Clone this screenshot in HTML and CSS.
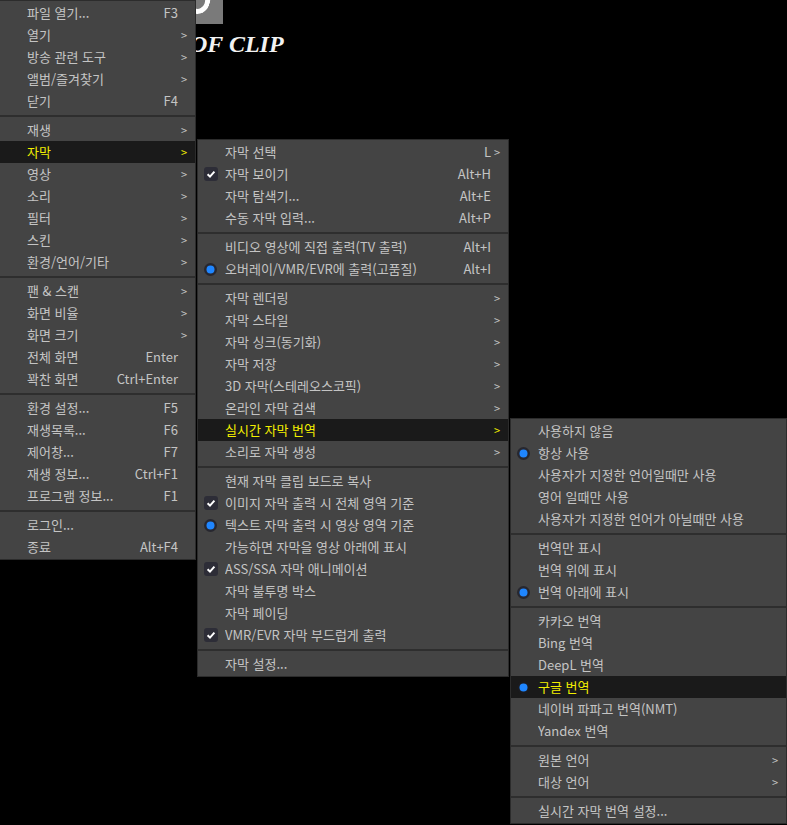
FILE: index.html
```html
<!DOCTYPE html>
<html lang="ko">
<head>
<meta charset="utf-8">
<title>메뉴</title>
<link rel="stylesheet" href="styles.css">
</head>
<body>
<div class="stage">
  <div class="logo"><span class="logo-curve"></span></div>
  <div class="tagline">OF CLIP</div>

  <div class="menu m1">
    <div class="item"><span class="ic"></span><span class="lb">파일 열기...</span><span class="sc">F3</span><span class="ar"></span></div>
    <div class="item"><span class="ic"></span><span class="lb">열기</span><span class="sc"></span><span class="ar">&gt;</span></div>
    <div class="item"><span class="ic"></span><span class="lb">방송 관련 도구</span><span class="sc"></span><span class="ar">&gt;</span></div>
    <div class="item"><span class="ic"></span><span class="lb">앨범/즐겨찾기</span><span class="sc"></span><span class="ar">&gt;</span></div>
    <div class="item"><span class="ic"></span><span class="lb">닫기</span><span class="sc">F4</span><span class="ar"></span></div>
    <div class="sep"></div>
    <div class="item"><span class="ic"></span><span class="lb">재생</span><span class="sc"></span><span class="ar">&gt;</span></div>
    <div class="item active"><span class="ic"></span><span class="lb">자막</span><span class="sc"></span><span class="ar">&gt;</span></div>
    <div class="item"><span class="ic"></span><span class="lb">영상</span><span class="sc"></span><span class="ar">&gt;</span></div>
    <div class="item"><span class="ic"></span><span class="lb">소리</span><span class="sc"></span><span class="ar">&gt;</span></div>
    <div class="item"><span class="ic"></span><span class="lb">필터</span><span class="sc"></span><span class="ar">&gt;</span></div>
    <div class="item"><span class="ic"></span><span class="lb">스킨</span><span class="sc"></span><span class="ar">&gt;</span></div>
    <div class="item"><span class="ic"></span><span class="lb">환경/언어/기타</span><span class="sc"></span><span class="ar">&gt;</span></div>
    <div class="sep"></div>
    <div class="item"><span class="ic"></span><span class="lb">팬 &amp; 스캔</span><span class="sc"></span><span class="ar">&gt;</span></div>
    <div class="item"><span class="ic"></span><span class="lb">화면 비율</span><span class="sc"></span><span class="ar">&gt;</span></div>
    <div class="item"><span class="ic"></span><span class="lb">화면 크기</span><span class="sc"></span><span class="ar">&gt;</span></div>
    <div class="item"><span class="ic"></span><span class="lb">전체 화면</span><span class="sc">Enter</span><span class="ar"></span></div>
    <div class="item"><span class="ic"></span><span class="lb">꽉찬 화면</span><span class="sc">Ctrl+Enter</span><span class="ar"></span></div>
    <div class="sep"></div>
    <div class="item"><span class="ic"></span><span class="lb">환경 설정...</span><span class="sc">F5</span><span class="ar"></span></div>
    <div class="item"><span class="ic"></span><span class="lb">재생목록...</span><span class="sc">F6</span><span class="ar"></span></div>
    <div class="item"><span class="ic"></span><span class="lb">제어창...</span><span class="sc">F7</span><span class="ar"></span></div>
    <div class="item"><span class="ic"></span><span class="lb">재생 정보...</span><span class="sc">Ctrl+F1</span><span class="ar"></span></div>
    <div class="item"><span class="ic"></span><span class="lb">프로그램 정보...</span><span class="sc">F1</span><span class="ar"></span></div>
    <div class="sep"></div>
    <div class="item"><span class="ic"></span><span class="lb">로그인...</span><span class="sc"></span><span class="ar"></span></div>
    <div class="item"><span class="ic"></span><span class="lb">종료</span><span class="sc">Alt+F4</span><span class="ar"></span></div>
  </div>

  <div class="menu m2">
    <div class="item"><span class="ic"></span><span class="lb">자막 선택</span><span class="sc">L</span><span class="ar">&gt;</span></div>
    <div class="item"><span class="ic"><svg class="chk" width="14" height="14" viewBox="0 0 14 14"><rect x="0" y="0" width="14" height="14" rx="3" fill="#2d2d37"/><path d="M3.6 7.2 L6 9.6 L10.4 4.6" fill="none" stroke="#fff" stroke-width="2"/></svg></span><span class="lb">자막 보이기</span><span class="sc">Alt+H</span><span class="ar"></span></div>
    <div class="item"><span class="ic"></span><span class="lb">자막 탐색기...</span><span class="sc">Alt+E</span><span class="ar"></span></div>
    <div class="item"><span class="ic"></span><span class="lb">수동 자막 입력...</span><span class="sc">Alt+P</span><span class="ar"></span></div>
    <div class="sep"></div>
    <div class="item"><span class="ic"></span><span class="lb">비디오 영상에 직접 출력(TV 출력)</span><span class="sc">Alt+I</span><span class="ar"></span></div>
    <div class="item"><span class="ic"><svg width="13" height="13" viewBox="0 0 13 13"><circle cx="6.5" cy="6.5" r="6.5" fill="#27272f"/><circle cx="6.5" cy="6.5" r="4" fill="#1f86ff"/></svg></span><span class="lb">오버레이/VMR/EVR에 출력(고품질)</span><span class="sc">Alt+I</span><span class="ar"></span></div>
    <div class="sep"></div>
    <div class="item"><span class="ic"></span><span class="lb">자막 렌더링</span><span class="sc"></span><span class="ar">&gt;</span></div>
    <div class="item"><span class="ic"></span><span class="lb">자막 스타일</span><span class="sc"></span><span class="ar">&gt;</span></div>
    <div class="item"><span class="ic"></span><span class="lb">자막 싱크(동기화)</span><span class="sc"></span><span class="ar">&gt;</span></div>
    <div class="item"><span class="ic"></span><span class="lb">자막 저장</span><span class="sc"></span><span class="ar">&gt;</span></div>
    <div class="item"><span class="ic"></span><span class="lb">3D 자막(스테레오스코픽)</span><span class="sc"></span><span class="ar">&gt;</span></div>
    <div class="item"><span class="ic"></span><span class="lb">온라인 자막 검색</span><span class="sc"></span><span class="ar">&gt;</span></div>
    <div class="item active"><span class="ic"></span><span class="lb">실시간 자막 번역</span><span class="sc"></span><span class="ar">&gt;</span></div>
    <div class="item"><span class="ic"></span><span class="lb">소리로 자막 생성</span><span class="sc"></span><span class="ar">&gt;</span></div>
    <div class="sep"></div>
    <div class="item"><span class="ic"></span><span class="lb">현재 자막 클립 보드로 복사</span><span class="sc"></span><span class="ar"></span></div>
    <div class="item"><span class="ic"><svg class="chk" width="14" height="14" viewBox="0 0 14 14"><rect x="0" y="0" width="14" height="14" rx="3" fill="#2d2d37"/><path d="M3.6 7.2 L6 9.6 L10.4 4.6" fill="none" stroke="#fff" stroke-width="2"/></svg></span><span class="lb">이미지 자막 출력 시 전체 영역 기준</span><span class="sc"></span><span class="ar"></span></div>
    <div class="item"><span class="ic"><svg width="13" height="13" viewBox="0 0 13 13"><circle cx="6.5" cy="6.5" r="6.5" fill="#27272f"/><circle cx="6.5" cy="6.5" r="4" fill="#1f86ff"/></svg></span><span class="lb">텍스트 자막 출력 시 영상 영역 기준</span><span class="sc"></span><span class="ar"></span></div>
    <div class="item"><span class="ic"></span><span class="lb">가능하면 자막을 영상 아래에 표시</span><span class="sc"></span><span class="ar"></span></div>
    <div class="item"><span class="ic"><svg class="chk" width="14" height="14" viewBox="0 0 14 14"><rect x="0" y="0" width="14" height="14" rx="3" fill="#2d2d37"/><path d="M3.6 7.2 L6 9.6 L10.4 4.6" fill="none" stroke="#fff" stroke-width="2"/></svg></span><span class="lb">ASS/SSA 자막 애니메이션</span><span class="sc"></span><span class="ar"></span></div>
    <div class="item"><span class="ic"></span><span class="lb">자막 불투명 박스</span><span class="sc"></span><span class="ar"></span></div>
    <div class="item"><span class="ic"></span><span class="lb">자막 페이딩</span><span class="sc"></span><span class="ar"></span></div>
    <div class="item"><span class="ic"><svg class="chk" width="14" height="14" viewBox="0 0 14 14"><rect x="0" y="0" width="14" height="14" rx="3" fill="#2d2d37"/><path d="M3.6 7.2 L6 9.6 L10.4 4.6" fill="none" stroke="#fff" stroke-width="2"/></svg></span><span class="lb">VMR/EVR 자막 부드럽게 출력</span><span class="sc"></span><span class="ar"></span></div>
    <div class="sep"></div>
    <div class="item"><span class="ic"></span><span class="lb">자막 설정...</span><span class="sc"></span><span class="ar"></span></div>
  </div>

  <div class="menu m3">
    <div class="item"><span class="ic"></span><span class="lb">사용하지 않음</span><span class="sc"></span><span class="ar"></span></div>
    <div class="item"><span class="ic"><svg width="13" height="13" viewBox="0 0 13 13"><circle cx="6.5" cy="6.5" r="6.5" fill="#27272f"/><circle cx="6.5" cy="6.5" r="4" fill="#1f86ff"/></svg></span><span class="lb">항상 사용</span><span class="sc"></span><span class="ar"></span></div>
    <div class="item"><span class="ic"></span><span class="lb">사용자가 지정한 언어일때만 사용</span><span class="sc"></span><span class="ar"></span></div>
    <div class="item"><span class="ic"></span><span class="lb">영어 일때만 사용</span><span class="sc"></span><span class="ar"></span></div>
    <div class="item"><span class="ic"></span><span class="lb">사용자가 지정한 언어가 아닐때만 사용</span><span class="sc"></span><span class="ar"></span></div>
    <div class="sep"></div>
    <div class="item"><span class="ic"></span><span class="lb">번역만 표시</span><span class="sc"></span><span class="ar"></span></div>
    <div class="item"><span class="ic"></span><span class="lb">번역 위에 표시</span><span class="sc"></span><span class="ar"></span></div>
    <div class="item"><span class="ic"><svg width="13" height="13" viewBox="0 0 13 13"><circle cx="6.5" cy="6.5" r="6.5" fill="#27272f"/><circle cx="6.5" cy="6.5" r="4" fill="#1f86ff"/></svg></span><span class="lb">번역 아래에 표시</span><span class="sc"></span><span class="ar"></span></div>
    <div class="sep"></div>
    <div class="item"><span class="ic"></span><span class="lb">카카오 번역</span><span class="sc"></span><span class="ar"></span></div>
    <div class="item"><span class="ic"></span><span class="lb">Bing 번역</span><span class="sc"></span><span class="ar"></span></div>
    <div class="item"><span class="ic"></span><span class="lb">DeepL 번역</span><span class="sc"></span><span class="ar"></span></div>
    <div class="item active"><span class="ic"><svg width="13" height="13" viewBox="0 0 13 13"><circle cx="6.5" cy="6.5" r="6.5" fill="#1b1b1e"/><circle cx="6.5" cy="6.5" r="4" fill="#1f86ff"/></svg></span><span class="lb">구글 번역</span><span class="sc"></span><span class="ar"></span></div>
    <div class="item"><span class="ic"></span><span class="lb">네이버 파파고 번역(NMT)</span><span class="sc"></span><span class="ar"></span></div>
    <div class="item"><span class="ic"></span><span class="lb">Yandex 번역</span><span class="sc"></span><span class="ar"></span></div>
    <div class="sep"></div>
    <div class="item"><span class="ic"></span><span class="lb">원본 언어</span><span class="sc"></span><span class="ar">&gt;</span></div>
    <div class="item"><span class="ic"></span><span class="lb">대상 언어</span><span class="sc"></span><span class="ar">&gt;</span></div>
    <div class="sep"></div>
    <div class="item"><span class="ic"></span><span class="lb">실시간 자막 번역 설정...</span><span class="sc"></span><span class="ar"></span></div>
  </div>
</div>
</body>
</html>
```
FILE: styles.css
```css
html, body {
  margin: 0;
  padding: 0;
  background: #000;
}
body {
  width: 787px;
  height: 825px;
  overflow: hidden;
  font-family: "Noto Sans CJK KR", "Noto Sans", sans-serif;
  font-size: 13px;
  color: #c4c4c4;
}
.stage {
  position: relative;
  width: 787px;
  height: 825px;
  overflow: hidden;
}

/* background canvas: partially visible logo */
.logo {
  position: absolute;
  left: 150px;
  top: 0;
  width: 73px;
  height: 24px;
  background: #7a7a7a;
  overflow: hidden;
}
.logo-curve {
  position: absolute;
  left: 36px;
  top: -12px;
  width: 14px;
  height: 16px;
  border: 5px solid #fff;
  border-top-color: transparent;
  border-left-color: transparent;
  border-radius: 50%;
  transform: rotate(20deg);
}
.tagline {
  position: absolute;
  left: 190px;
  top: 29px;
  font-family: "Liberation Serif", serif;
  font-style: italic;
  font-weight: bold;
  font-size: 24px;
  line-height: 30px;
  color: #f2f2f2;
  white-space: nowrap;
}

/* menus */
.menu {
  position: absolute;
  box-sizing: border-box;
  background: #444444;
  border: 1px solid #2c2c2c;
  padding: 1px 0;
  display: flex;
  flex-direction: column;
}
.m1 { left: -1px; top: 0; width: 197px; }
.m2 { left: 197px; top: 139px; width: 312px; }
.m3 { left: 510px; top: 418px; width: 277px; }

.item {
  display: grid;
  grid-template-columns: 27px 1fr auto 17px;
  align-items: center;
  height: 22px;
  line-height: 22px;
  white-space: nowrap;
}
.item.active {
  background: #1a1a1a;
  color: #f2ef00;
}
.ic {
  display: flex;
  align-items: center;
  padding-left: 6px;
  height: 22px;
}
.ic svg { display: block; }
.lb { overflow: hidden; }
.sc { text-align: right; }
.ar {
  padding-left: 3px;
  font-size: 11px;
}
.sep {
  height: 2px;
  background: #2e2e2e;
  margin: 3px 0 2px;
}
```
